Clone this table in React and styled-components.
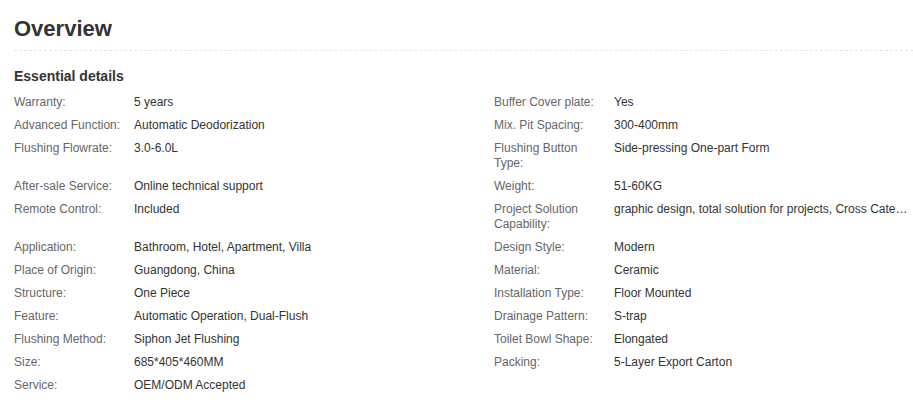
import React from 'react';
import styled, { createGlobalStyle } from 'styled-components';

const GlobalStyle = createGlobalStyle`
  body {
    margin: 0;
    background: #fff;
    font-family: "Liberation Sans", Arial, sans-serif;
  }
`;

const Wrapper = styled.div`
  padding-left: 14px;
  width: 899px;
`;

const Title = styled.h2`
  margin: 0;
  padding: 16px 0 8px;
  font-size: 22px;
  line-height: 26px;
  font-weight: bold;
  color: #333;
  border-bottom: 1px dashed #e6e6e6;
`;

const SectionTitle = styled.h3`
  margin: 17px 0 10px;
  font-size: 14px;
  line-height: 17px;
  font-weight: bold;
  color: #333;
`;

const DetailGrid = styled.div`
  display: grid;
  grid-template-columns: 480px 418px;
`;

const Item = styled.div`
  display: grid;
  grid-template-columns: 120px minmax(0, 1fr);
  padding-bottom: 8px;
  font-size: 12px;
  line-height: 15px;
`;

const Label = styled.div`
  color: #666;
  padding-right: 8px;
`;

const Value = styled.div`
  color: #333;
  white-space: nowrap;
  overflow: hidden;
  text-overflow: ellipsis;
`;

const details = [
  ['Warranty:', '5 years'],
  ['Buffer Cover plate:', 'Yes'],
  ['Advanced Function:', 'Automatic Deodorization'],
  ['Mix. Pit Spacing:', '300-400mm'],
  ['Flushing Flowrate:', '3.0-6.0L'],
  ['Flushing Button Type:', 'Side-pressing One-part Form'],
  ['After-sale Service:', 'Online technical support'],
  ['Weight:', '51-60KG'],
  ['Remote Control:', 'Included'],
  ['Project Solution Capability:', 'graphic design, total solution for projects, Cross Categories Consolidation'],
  ['Application:', 'Bathroom, Hotel, Apartment, Villa'],
  ['Design Style:', 'Modern'],
  ['Place of Origin:', 'Guangdong, China'],
  ['Material:', 'Ceramic'],
  ['Structure:', 'One Piece'],
  ['Installation Type:', 'Floor Mounted'],
  ['Feature:', 'Automatic Operation, Dual-Flush'],
  ['Drainage Pattern:', 'S-trap'],
  ['Flushing Method:', 'Siphon Jet Flushing'],
  ['Toilet Bowl Shape:', 'Elongated'],
  ['Size:', '685*405*460MM'],
  ['Packing:', '5-Layer Export Carton'],
  ['Service:', 'OEM/ODM Accepted'],
];

const App = () => (
  <Wrapper>
    <GlobalStyle />
    <Title>Overview</Title>
    <SectionTitle>Essential details</SectionTitle>
    <DetailGrid>
      {details.map(([label, value]) => (
        <Item key={label}>
          <Label>{label}</Label>
          <Value>{value}</Value>
        </Item>
      ))}
    </DetailGrid>
  </Wrapper>
);

export default App;
